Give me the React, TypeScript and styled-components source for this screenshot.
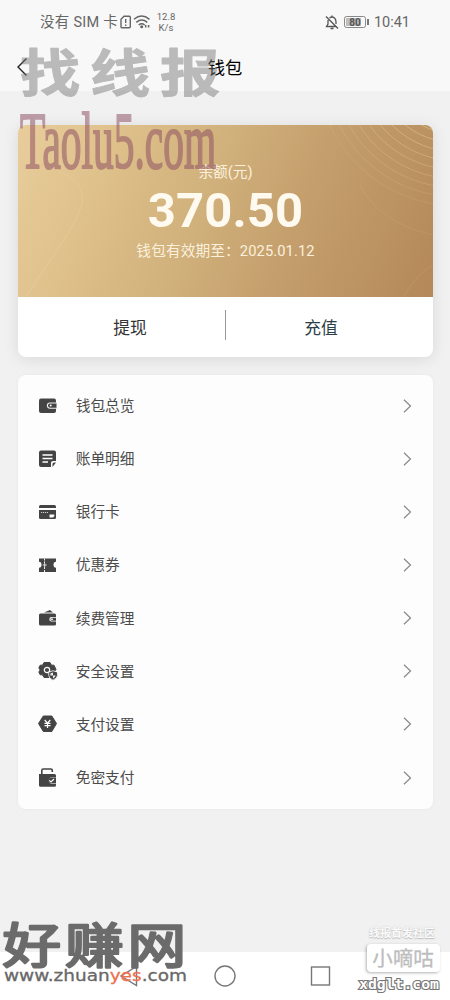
import React from 'react';
import styled, { createGlobalStyle } from 'styled-components';

const Global = createGlobalStyle`
  * { box-sizing: border-box; }
  body { margin: 0; background: #f1f1f1; }
`;

const Screen = styled.div`
  position: relative;
  display: flex;
  flex-direction: column;
  width: 450px;
  height: 1000px;
  overflow: hidden;
  background: #f1f1f1;
  font-family: Roboto, 'Noto Sans CJK SC', sans-serif;
`;

const Header = styled.header`
  height: 91px;
  flex: none;
  background: #f8f8f8;
`;

const StatusBar = styled.div`
  display: flex;
  align-items: center;
  height: 44px;
  padding: 0 40px;
  color: #666;
  font-size: 14.5px;
  white-space: nowrap;
`;

const Carrier = styled.span`
  width: 79px;
  letter-spacing: 0.27px;
  line-height: 20px;
  margin-top: 2px;
`;

const Speed = styled.span`
  width: 26px;
  font-size: 9.5px;
  line-height: 11px;
  text-align: center;
`;

const StatusRight = styled.div`
  display: flex;
  align-items: center;
  margin-left: auto;
`;

const Battery = styled.span`
  display: flex;
  align-items: center;
  justify-content: center;
  width: 22px;
  height: 12px;
  margin-left: 5px;
  border: 1px solid #888;
  border-radius: 2.5px;
  background: linear-gradient(90deg, #bdbdbd 80%, #f8f8f8 80%);
  box-shadow: inset 0 0 0 1px #f8f8f8;
  font-size: 10px;
  font-weight: 700;
  color: #555;
`;

const BatteryTip = styled.span`
  width: 2px;
  height: 6px;
  margin: 0 5px 0 1px;
  background: #777;
`;

const TitleBar = styled.div`
  display: grid;
  grid-template-columns: 40px 1fr 40px;
  align-items: center;
  height: 46px;
  padding: 0 15px;
`;

const Title = styled.h1`
  margin: 0;
  font-size: 17.3px;
  font-weight: 400;
  font-family: 'Noto Sans CJK SC', sans-serif;
  line-height: 24px;
  text-align: center;
  color: #000;
`;

const Content = styled.main`
  flex: 1;
  padding: 33.5px 17px 0 18px;
`;

const Card = styled.section`
  height: 232.5px;
  border-radius: 8px;
  overflow: hidden;
  background: #fff;
  box-shadow: 0 2px 16px rgba(0, 0, 0, 0.1);
`;

const Balance = styled.div`
  position: relative;
  display: flex;
  flex-direction: column;
  align-items: center;
  height: 172px;
  padding-top: 37px;
  color: #fffaf0;
  background: linear-gradient(112deg, #e8cd9b 0%, #dec08a 22%, #d0b07b 45%, #c39d6b 68%, #b48858 100%);
`;

const Waves = styled.svg`
  position: absolute;
  inset: 0;
`;

const Caption = styled.div`
  position: relative;
  height: 22px;
  font-size: 14.7px;
  line-height: 21px;
  color: #fbf0dc;
`;

const Amount = styled.div`
  position: relative;
  height: 57px;
  font-size: 49px;
  font-weight: 700;
  line-height: 54px;
  letter-spacing: 0.1px;
`;

const Expiry = styled(Caption)`
  letter-spacing: 0.1px;
`;

const Actions = styled.div`
  display: grid;
  grid-template-columns: 207px 1px 207px;
  align-items: center;
  height: 60px;
`;

const Action = styled.button<{ $before?: number; $after?: number; $tone: string }>`
  padding: 1px ${(p) => p.$after ?? 0}px 0 ${(p) => p.$before ?? 0}px;
  border: 0;
  background: none;
  font: 400 16.8px/26px 'Noto Sans CJK SC', sans-serif;
  text-align: center;
  color: ${(p) => p.$tone};
`;

const Divider = styled.span`
  height: 30px;
  margin-top: -4px;
  background: #999;
`;

const Menu = styled.nav`
  height: 433.5px;
  margin-top: 18px;
  padding-top: 4px;
  border-radius: 8px;
  background: #fdfdfd;
  box-shadow: 0 0 5px rgba(0, 0, 0, 0.04);
`;

const Row = styled.div`
  display: flex;
  align-items: center;
  height: 53.15px;
  padding: 0 20px;
`;

const Label = styled.span`
  flex: 1;
  padding: 0 0 1px 17.7px;
  font: 400 14.7px/22px 'Noto Sans CJK SC', sans-serif;
  color: #4c4c4c;
`;

const NavBar = styled.footer`
  display: flex;
  align-items: center;
  height: 48px;
  flex: none;
  background: #fff;
`;

const Overlay = styled.svg<{ $top: number }>`
  position: absolute;
  left: 0;
  top: ${(p) => p.$top}px;
  pointer-events: none;
`;

const Badge = styled.div`
  position: absolute;
  left: 355px;
  top: 924px;
  width: 87px;
  display: flex;
  flex-direction: column;
  align-items: center;
  font-family: 'Noto Sans CJK SC', sans-serif;
`;

const BadgeTop = styled.span`
  height: 20px;
  margin-left: 7px;
  font-size: 11px;
  font-weight: 700;
  line-height: 17px;
  color: #fafafa;
  text-shadow: 0 0 2px #ccc, 0 1px 1px #bbb;
  white-space: nowrap;
`;

const BadgeName = styled.span`
  width: 73px;
  height: 28px;
  margin-left: 9px;
  border-radius: 4px;
  background: #fff;
  box-shadow: -1px 1px 3px rgba(0, 0, 0, 0.3);
  font-size: 20.5px;
  line-height: 27px;
  text-align: center;
  color: #bdbdbd;
  -webkit-text-stroke: 0.3px #bdbdbd;
`;

const dark = '#444';

const icons: Record<string, React.ReactNode> = {
  wallet: (
    <>
      <rect x="1" y="2.5" width="17" height="14.5" rx="2" fill={dark} />
      <path d="M18.5 7H12a2.6 2.6 0 0 0 0 5.2h6.500" fill={dark} stroke="#eee" strokeWidth="1.1" />
      <circle cx="12.700" cy="9.600" r="1" fill="#fff" />
    </>
  ),
  bill: (
    <>
      <path d="M3 1.500h13a2 2 0 0 1 2 2V12h-3a2 2 0 0 0-2 2v4H3a2 2 0 0 1-2-2V3.500a2 2 0 0 1 2-2z" fill={dark} />
      <path d="M14.500 18v-3q0-1.500 1.500-1.500h2z" fill={dark} />
      <path d="M4.500 6h10M4.500 9.500h10M4.500 13h5.500" stroke="#fff" strokeWidth="1.300" />
    </>
  ),
  bank: (
    <>
      <path d="M1 6V4.500Q1 3 2.500 3h14Q18 3 18 4.500V6z" fill={dark} />
      <path d="M1 8h17v7.500Q18 17 16.500 17h-14Q1 17 1 15.500z" fill={dark} />
      <path d="M3 10.500h7" stroke="#ccc" strokeDasharray="1.200 .8" />
      <path d="M11.500 12.500h4.800v1.700l-1.300 1.200h-3.500z" fill="#fff" />
    </>
  ),
  coupon: (
    <>
      <path d="M1 3.500h17v3.200q-2.500 0-2.500 3t2.500 3V17H1v-4.300q2.500 0 2.500-3t-2.500-3z" fill={dark} />
      <path d="M6.500 3.500V8M6.500 12v5" stroke="#eee" strokeWidth="1" strokeDasharray="2 1" />
      <path d="M4.700 10h4M6.700 8v4" stroke="#eee" strokeWidth=".9" />
    </>
  ),
  renew: (
    <>
      <path d="M6 4.500L12 2l3 2.500z" fill={dark} />
      <path d="M2.500 5.500h14Q18 5.500 18 7v2h-4.500a2.200 2.200 0 0 0 0 4.400H18v2.800q0 1.300-1.500 1.300h-14Q1 17.500 1 16V7q0-1.500 1.500-1.500z" fill={dark} />
      <path d="M18 9.700h-4a1.500 1.500 0 0 0 0 3h4z" fill={dark} />
      <circle cx="14" cy="11.200" r=".9" fill="#fff" />
    </>
  ),
  security: (
    <>
      <path d="M6 1.500h6l1.500 2.700H16l2 4.300-1.500 2-4.500 6H6l-1.500-2.700H2.200L.8 11l1.400-2L.8 7l1.400-2.800h2.300z" fill={dark} stroke={dark} strokeLinejoin="round" />
      <circle cx="9" cy="9" r="2.700" fill={dark} stroke="#fff" strokeWidth="1.200" />
      <path d="M15 9.700l4.500 1.500v3q0 3-4.500 5-4.300-2-4.300-5v-3z" fill={dark} stroke="#fff" strokeWidth=".8" />
      <path d="M15 11.500v3h2.700q-.3 1.700-2.700 3v-3h-2.600v-2z" fill="#eee" />
    </>
  ),
  payment: (
    <>
      <path d="M5.300 2h8.500L18.500 9.500 13.800 17.500H5.300L.5 9.500z" fill={dark} stroke={dark} strokeLinejoin="round" />
      <path d="M6.700 6l2.800 3.200L12.300 6M9.500 9v5M6.500 9.400h6M6.500 11.600h6" fill="none" stroke="#fff" strokeWidth="1.200" />
    </>
  ),
  nopass: (
    <>
      <path d="M3.800 8V2.500q0-1.500 1.500-1.500h7.500q1.500 0 1.500 1.500v1.500" fill="none" stroke={dark} strokeWidth="1.600" />
      <path d="M1 6h15.500Q18 6 18 7.500v1.800h-4a3.200 3.200 0 0 0 0 6.400h4v1.500Q18 18.700 16.500 18.700h-14Q1 18.700 1 17.200z" fill={dark} />
      <path d="M18 9.600h-4.500a2.700 2.700 0 0 0 0 5.700H18z" fill={dark} />
      <path d="M11.300 12.300l1.700 1.700 3-3" fill="none" stroke="#fff" strokeWidth="1.100" />
    </>
  ),
};

const items: [string, string][] = [
  ['wallet', '钱包总览'],
  ['bill', '账单明细'],
  ['bank', '银行卡'],
  ['coupon', '优惠券'],
  ['renew', '续费管理'],
  ['security', '安全设置'],
  ['payment', '支付设置'],
  ['nopass', '免密支付'],
];

export default function App() {
  return (
    <Screen>
      <Global />
      <Header>
        <StatusBar>
          <Carrier>没有 SIM 卡</Carrier>
          <svg width="13" height="14" viewBox="0 0 13 14" fill="none" stroke="#666" strokeWidth="1.400">
            <path d="M5 1.200h5.300q1 0 1 1v9.600q0 1-1 1H3q-1 0-1-1V4.200zM6.700 4v4M6.700 9.500v1.400" />
          </svg>
          <svg width="21" height="16" viewBox="0 0 19 16" fill="none" stroke="#666" strokeWidth="1.500">
            <path d="M1 5.300q7.500-6.500 15.500 0M3.300 8.300q5.500-4.500 11 0M5.700 11q3-2.500 6 0" />
            <circle cx="8.700" cy="12.700" r=".8" fill="#666" />
            <path d="M12.700 11v3M15.600 11v3" strokeDasharray="2 .6" />
          </svg>
          <Speed>12.8<br />K/s</Speed>
          <StatusRight>
            <svg width="14" height="15" viewBox="0 0 14 15" fill="none" stroke="#555" strokeWidth="1.300">
              <path d="M1 1.500l12 12M4.500 3Q7 1 9.500 3q1.500 1.200 1.500 4v2M3 5v4l-1.500 2.500h9M5.500 13.500h3M7 .5v1.500" />
            </svg>
            <Battery>80</Battery>
            <BatteryTip />
            10:41
          </StatusRight>
        </StatusBar>
        <TitleBar>
          <svg width="16" height="20" viewBox="0 0 16 20" fill="none" stroke="#222" strokeWidth="1.400">
            <path d="M11.500 1.500L3 10l8.500 8.500" />
          </svg>
          <Title>钱包</Title>
        </TitleBar>
      </Header>
      <Content>
        <Card>
          <Balance>
            <Waves width="415" height="172" fill="none" stroke="#ecd3a3">
              {[0, 1, 2, 3, 4, 5, 6, 7, 8].map((i) => (
                <ellipse key={i} cx="440" cy="-55" rx={72 + i * 8.500} ry={64 + i * 9} opacity={0.5 - i * 0.045} />
              ))}
              <path d="M36 44Q68 56 64 78C59 101 30 136 8 172" opacity=".5" />
              <path d="M342 60Q360 97 415 110M385 172Q400 148 415 140" opacity=".12" />
            </Waves>
            <Caption>余额(元)</Caption>
            <Amount>370.50</Amount>
            <Expiry>钱包有效期至：2025.01.12</Expiry>
          </Balance>
          <Actions>
            <Action $before={17} $tone="#333">提现</Action>
            <Divider />
            <Action $after={17} $tone="#2d3e48">充值</Action>
          </Actions>
        </Card>
        <Menu>
          {items.map(([icon, label]) => (
            <Row key={icon}>
              <svg width="20" height="20" viewBox="0 0 20 20">{icons[icon]}</svg>
              <Label>{label}</Label>
              <svg width="12" height="16" viewBox="0 0 12 16" fill="none" stroke="#888" strokeWidth="1.200">
                <path d="M3 1.800L9.500 8 3 14.200" />
              </svg>
            </Row>
          ))}
        </Menu>
      </Content>
      <NavBar>
        <svg width="450" height="48" fill="none" stroke="#777" strokeWidth="1.400">
          <path d="M136.500 14.500v19L121 24z" />
          <circle cx="225" cy="24" r="10" />
          <rect x="311.500" y="15" width="18" height="18" />
        </svg>
      </NavBar>

      <Overlay width="450" height="210" $top={0}>
        <g fill="#777" stroke="#777" strokeWidth="1" strokeLinejoin="round" opacity=".48" fontFamily="'Noto Sans CJK SC', sans-serif" fontWeight="700">
          {['找', '线', '报'].map((c, i) => (
            <text key={c} transform={`translate(${20 + i * 70} 92) scale(1.180 1)`} fontSize="51">{c}</text>
          ))}
        </g>
        <text transform="translate(20 167.500) scale(.6 1)" textLength="327" lengthAdjust="spacingAndGlyphs" fontSize="81" fontFamily="'Liberation Serif', serif" fill="#8c4e64" stroke="#8c4e64" strokeWidth="2.200" opacity=".52">Taolu5.com</text>
      </Overlay>

      <Overlay width="450" height="110" $top={890}>
        <g fill="#6b6b6b" stroke="#6b6b6b" strokeWidth="2.400" strokeLinejoin="round" fontFamily="'Noto Sans CJK SC', sans-serif" fontWeight="400">
          {['好', '赚', '网'].map((c, i) => (
            <text key={c} transform={`translate(${2.5 + i * 62.5} 72.500) scale(1.220 1)`} fontSize="48">{c}</text>
          ))}
        </g>
        <text x="4" y="91" textLength="183" lengthAdjust="spacingAndGlyphs" fontSize="15.500" fontFamily="'DejaVu Sans', sans-serif" fill="#686868" stroke="#686868" strokeWidth=".3">
          www.zhuan<tspan fill="#ee704e" stroke="#ee704e">yes</tspan>.com
        </text>
        <text x="359" y="99" textLength="80" lengthAdjust="spacingAndGlyphs" fontSize="14" fontWeight="700" fontFamily="'DejaVu Sans Mono', monospace" fill="#fff" stroke="#777" strokeWidth="2.200" paintOrder="stroke">xdglt.com</text>
      </Overlay>
      <Badge>
        <BadgeTop>线报首发社区</BadgeTop>
        <BadgeName>小嘀咕</BadgeName>
      </Badge>
    </Screen>
  );
}
